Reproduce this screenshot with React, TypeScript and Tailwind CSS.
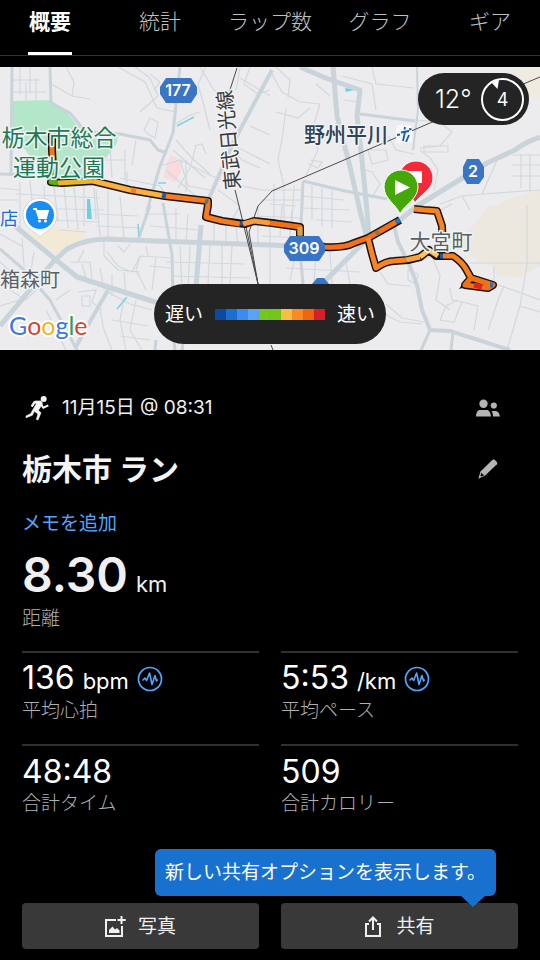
import React from 'react';

interface Road {
  d: string;
  w: number;
}

interface Segment {
  d: string;
  color: string;
}

interface Stat {
  value: string;
  unit?: string;
  label: string;
  trend?: boolean;
}

const tabs = ['概要', '統計', 'ラップ数', 'グラフ', 'ギア'];

const stats: Stat[] = [
  { value: '136', unit: 'bpm', label: '平均心拍', trend: true },
  { value: '5:53', unit: '/km', label: '平均ペース', trend: true },
  { value: '48:48', label: '合計タイム' },
  { value: '509', label: '合計カロリー' },
];

const legendColors = [
  'bg-[#0a4a9f]',
  'bg-[#1a6fd0]',
  'bg-[#3a8cf0]',
  'bg-[#5aa2f2]',
  'bg-[#72c61c]',
  'bg-[#72c61c]',
  'bg-[#f5bf45]',
  'bg-[#f98a25]',
  'bg-[#ec660c]',
  'bg-[#d61f26]',
];

const mainRoads: Road[] = [
  { d: 'M0 326 53 262 67 249Q85 239 107 239L155 241 270 245 310 247', w: 5 },
  { d: 'M10 222 77 277 155 302 185 310', w: 5 },
  { d: 'M0 249 22 268 50 300 77 350', w: 3 },
  { d: 'M75 348 108 290', w: 4 },
  { d: 'M201 225 198 262 195 300', w: 5 },
  { d: 'M163 203 172 255 173 300', w: 3 },
  { d: 'M150 205 138 240', w: 3 },
  { d: 'M272 70 233 143 207 203', w: 4 },
  { d: 'M50 67 51 103 70 113 84 130 95 132 120 134 150 140 158 150 167 153', w: 3 },
  { d: 'M180 67 173 133 160 166 147 211', w: 3 },
  { d: 'M12 67 11 176M0 174 50 176', w: 3 },
  { d: 'M333 67 337 116 350 167 360 211 367 238', w: 5 },
  { d: 'M300 67 328 79 360 90 357 116 362 160 367 211 369 236', w: 5 },
  { d: 'M360 114 415 121', w: 3 },
  { d: 'M417 67 418 110 413 150', w: 2 },
  { d: 'M540 137Q525 142 515 150L487 163 417 206 400 220 368 238 330 276 298 308', w: 5 },
  { d: 'M303 181 345 191 387 199M303 181 300 250 303 285', w: 3 },
  { d: 'M393 222 398 242 410 266 417 285 422 310 430 330 M430 330 450 331 510 350', w: 4 },
  { d: 'M430 330 421 350M453 332 451 350', w: 3 },
  { d: 'M174 340 175 350M156 340 155 350M183 342 182 350', w: 3 },
];

const streets = [
  'M20 67V95M30 67V94M12 80H40M12 92H46M26 82V100M36 78V102',
  'M51 84 72 96 90 99M66 67 74 82 72 96',
  'M135 67 150 78 158 96M158 96 140 112M150 118 158 122 155 138 148 134 144 130 150 118',
  'M118 67 145 82 157 108 176 112M150 74 160 82 154 90',
  'M176 124 188 116 200 112M200 67 214 90 232 100M206 67 198 84 204 106 210 130',
  'M240 68 236 90M240 78 270 96M250 67 244 84 258 94 270 90M250 126 270 135M233 145 270 164',
  'M176 140 192 158 210 174M160 166 180 160 196 168 212 176M180 160 188 186 210 190M196 146 190 168 178 188',
  'M212 176 232 184 262 190M233 150 242 160 260 168M218 190 240 206 232 220',
  'M173 150 205 178M166 170 200 200M186 192 186 160M194 146 202 144 206 154',
  'M125 150V182M110 146 112 178M136 140 132 165M100 160H126M120 178 160 186 170 202M127 172V186',
  'M20 182V230M30 180 34 222M44 186 46 220M54 186 58 222M64 186 68 228M74 186 78 230M84 186V226M94 188 96 220',
  'M16 194 100 198M24 208 104 210M50 220 100 222M60 230 86 232M0 188 20 190M0 200H18',
  'M96 190 100 236M108 190V238M120 196 124 238M96 214 138 216M96 226 140 228',
  'M107 252 118 266 132 272 140 256M118 246 124 252 130 244M104 240 104 256 118 270 140 272',
  'M82 264 86 278M70 262 90 262 92 278M84 250 78 262M100 268 104 290M112 274 112 296M124 272 126 296',
  'M140 256 172 258M140 256 136 270 146 290M146 246 148 256M150 266 170 268M156 258 152 290',
  'M78 292 96 290 92 302 102 310M82 296H90V306H82ZM56 300 70 290M46 310 66 350M100 310 104 330 112 350',
  'M108 292 130 304 152 310M124 298 120 320 126 350M136 300 130 330 142 350M112 320 148 326M120 336 150 340',
  'M0 262 20 280M10 290 26 300 40 286M22 238 24 266M34 252 30 276M0 306 20 300M0 234 22 246',
  'M180 246 182 290M190 246 188 290M210 246 208 284M222 246 222 286M232 246 230 284M166 262 245 264M172 276 250 278',
  'M176 208V242M188 214 186 244M214 222V244M226 224V246M236 226 238 246M150 226 200 230M144 214 180 214',
  'M258 206V245M270 226V284M282 206 280 236M292 210 290 236M262 236 298 238M258 216 300 218M270 204 296 206',
  'M274 184V222M284 186V222M294 186 292 222M262 190H302M262 200H300M312 186V220M322 188V226M332 190V228M302 196 344 200M302 208 350 210M316 220 352 222',
  'M272 74 282 92 300 102 320 104M276 67 290 80 288 98M286 108 282 140 278 160 284 186M320 104 312 130 318 150 306 176',
  'M276 112 298 118 310 108M316 84 330 96M342 76 372 84 376 110M344 100 360 102M372 67 376 84 414 88',
  'M310 160 322 162 318 168 308 164M360 168 372 172 380 184 372 198M368 150 386 150 388 160 372 164ZM388 136 396 150 414 154',
  'M414 120 440 122 452 132 440 146 420 148M436 112 440 122M420 150 430 158 438 170 434 190M424 146H448V152H424Z',
  'M440 204 462 196 482 194 540 190M482 194 498 158M462 196 470 210M521 154 521 188M530 154V192M512 155H540M512 165H540M512 176H540',
  'M296 252 290 280M316 252 314 284M330 252 332 284M345 258 350 284M286 268 360 272M300 262 304 282',
  'M380 272 388 284 410 286M408 270 418 274 416 284 408 280ZM418 262 432 256 440 276 436 300 450 310',
  'M437 212 452 204M470 263H540V266M527 205 527 265 520 306 507 350M494 266V282M504 286 498 300 488 330M458 300 446 306 440 320 454 322 462 302 478 306 474 330',
  'M450 288 452 300 462 302M490 282 540 300M520 306 540 312M386 304 402 318 424 322M382 310 388 316 400 322 422 324',
];

const route =
  'M52 131 52 150 53 168 51 182 62 183 93 181 130 190 165 196 208 201 208 205 206 217 222 221 245 224 254 221 272 223 300 227 300 244 325 247Q345 248 354 243L368 238 384 229 400 220M368 238 372 254 376 268Q386 261 394 261L408 260 420 257 429 250 436 256 453 256Q462 262 466 269L471 278 493 285 488 288 465 285 471 278M414 209 424 210 437 211 442 226 443 252';

const segments: Segment[] = [
  { d: 'M52 131 52 140', color: '#8d9085' },
  { d: 'M52 140 52 150 53 168', color: '#f0791a' },
  { d: 'M53 168 51 182 58 183', color: '#5fae1c' },
  { d: 'M58 183 93 181', color: '#e9b52c' },
  { d: 'M93 181 130 190 165 196', color: '#fbb03e' },
  { d: 'M131 190 136 191', color: '#f57d20' },
  { d: 'M165 196 208 201 208 205 206 217 222 221 240 224', color: '#f77b1c' },
  { d: 'M162 195 166 196', color: '#1e5aa8' },
  { d: 'M205 201 208 202', color: '#51748a' },
  { d: 'M240 223 243 224', color: '#1e5aa8' },
  { d: 'M243 224 254 221 270 223', color: '#fb9c35' },
  { d: 'M270 223 300 227 300 244 325 247Q345 248 354 243L368 238 384 229 396 222', color: '#f0711a' },
  { d: 'M300 227V235', color: '#d3a83a' },
  { d: 'M396 222 400 220', color: '#1e7abf' },
  { d: 'M376 234 379 232', color: '#7e7462' },
  { d: 'M368 238 372 254 376 268Q386 261 394 261L406 260', color: '#f98426' },
  { d: 'M406 260 420 257', color: '#f9a23a' },
  { d: 'M420 257 429 250 438 256', color: '#ffc64f' },
  { d: 'M440 256 443 256', color: '#1e5aa8' },
  { d: 'M443 256 453 256Q462 262 466 269L471 278', color: '#f58020' },
  { d: 'M471 278 493 285 488 288 465 285 471 278', color: '#ee7218' },
  { d: 'M474 285 482 287', color: '#dc2618' },
  { d: 'M490 285 493 285', color: '#2f6fae' },
  { d: 'M414 209 424 210 437 211 442 226 443 252', color: '#f58425' },
];

const RunIcon = () => (
  <svg viewBox="75 45 75 78" className="w-[25px] h-[26px]" fill="none" stroke="#f4f4f4" aria-hidden="true">
    <circle cx="131" cy="57" r="9" fill="#f4f4f4" stroke="none" />
    <path d="M95 80 103 67 120 67" strokeWidth="7" />
    <path d="M104 63 122 63Q129 67 127 73L115 91 123 98 114 120 109 118 114 102 103 94 97 106 78 113 78 108 92 101 109 71Z" fill="#f4f4f4" strokeWidth="2" />
    <path d="M121 71 130 83 145 76" strokeWidth="6" />
  </svg>
);

const PeopleIcon = () => (
  <svg viewBox="0 0 24 18" className="w-6 h-[18px]" fill="#b4b4b4" aria-hidden="true">
    <circle cx="7.5" cy="4.7" r="4.2" />
    <circle cx="17.8" cy="6.5" r="3.1" />
    <path d="M0 17.5C.2 13.500 1.500 11 4.200 11H10.500C13.200 11 14.500 13.500 15 17.500ZM15.500 12H20C22.300 12.500 23.500 14.500 23.900 17.500H17C16.900 15 16.500 13.300 15.500 12Z" />
  </svg>
);

const PencilIcon = () => (
  <svg viewBox="0 0 20 20" className="w-5 h-5" aria-hidden="true">
    <path d="M14.500.800Q15.800 0 16.700.800L18.900 3Q19.800 4 18.900 5.300L7.200 16.500.300 19.700 2.500 12.500Z" fill="#b4b4b4" />
    <path d="M3.700 13.500 4.600 15.300 6.400 16 3.200 17.600 2.400 16.800Z" fill="#000" />
  </svg>
);

const TrendIcon = () => (
  <svg viewBox="0 0 26 26" className="w-[26px] h-[26px]" fill="none" stroke="#4fa6ff" aria-hidden="true">
    <circle cx="13" cy="13" r="11.500" strokeWidth="1.700" />
    <path d="M5.500 14.500 8 12 9.600 14.500 12.600 7 15 18.500 18 9.500 19.500 15 20.700 13.500" strokeWidth="1.600" strokeLinejoin="round" />
  </svg>
);

const PhotoIcon = () => (
  <svg viewBox="0 0 21 21" className="w-[21px] h-[21px]" fill="none" stroke="#f0f0f0" strokeWidth="2" aria-hidden="true">
    <path d="M11 4H1V20H17V10M16.500 0V8M12.500 4H20.700" />
    <path d="M4 17V14L7.500 10.500 10 13.500 12 12 14.500 14.500V17Z" fill="#f0f0f0" stroke="none" />
  </svg>
);

const ShareIcon = () => (
  <svg viewBox="0 0 18 21" className="w-[18px] h-[21px]" fill="none" stroke="#f0f0f0" strokeWidth="2" aria-hidden="true">
    <path d="M5 8H2V20H16V8H13M9 14V2M5 5.500 9 1.500 13 5.500" />
  </svg>
);

const RouteMap = () => (
  <svg
    viewBox="0 67 540 283"
    preserveAspectRatio="xMidYMid slice"
    className="block w-full h-[283px] bg-[#ecebed] font-['Inter','Noto_Sans_CJK_JP',sans-serif]"
    role="img"
    aria-label="ランのルート"
  >
    {/* land use */}
    <path d="M13 101 50 100 65 110 77 125 93 137 118 133 117 143 100 166 103 180 48 181 13 133Z" fill="#b4e6c9" />
    <path d="M490 205H540V265H484L457 245Z" fill="#ece7df" />
    <path d="M494 265H540L520 277 497 276Z" fill="#ece7df" />
    <path d="M512 67H540V100L520 92Z" fill="#f0ebe0" />
    <path d="M505 200 540 190V210H488Z" fill="#ece7df" />
    <path d="M50 229 80 228 85 236 60 256 28 234Z" fill="#f3ead6" />
    <path d="M170 155 180 160 181 172 175 182 163 177Z" fill="#f9dadd" />

    <g fill="none" stroke="#d0dade" strokeWidth="1.200">
      {streets.map((d) => (
        <path key={d} d={d} />
      ))}
    </g>
    <g fill="none" stroke="#c8d4da" strokeLinejoin="round">
      {mainRoads.map((road) => (
        <path key={road.d} d={road.d} strokeWidth={road.w} />
      ))}
    </g>

    {/* water */}
    <path d="M177 126 194 117M117 309 127 297M138 224 139 236M158 183H166" fill="none" stroke="#7fd3e2" strokeWidth="1.500" />
    <path d="M87 199H90L92 219H87ZM345 88 354 90 346 92Z" fill="#6fd0e2" />

    {/* railways */}
    <g fill="none" stroke="#4a4a4c" strokeWidth="1">
      <path d="M237 68 228 96M235 190 240 210 258 284M245 222 258 284" />
      <path d="M540 77 430 123 272 191 258 206 249 232 258 284" />
      <path d="M271 345 273 350" />
    </g>

    {/* activity track */}
    <g fill="none" strokeLinejoin="round">
      <path d={route} stroke="#1c1410" strokeWidth="8" />
      <path d="M459 289 466 279V287Z" fill="#1c1410" />
      {segments.map((s) => (
        <path key={s.d} d={s.d} stroke={s.color} strokeWidth="5" />
      ))}
    </g>

    {/* road numbers */}
    <g fill="#3a74c4">
      <path d="M166 78H191L197 87V94L191 103H166L160 94V87Z" />
      <path d="M467 159H479L484 167V177L479 184H467L463 177V167Z" />
      <path d="M290 236H319L325 245V252L319 261H290L284 252V245Z" />
      <path d="M317 278H324L329 284V300H312V284Z" />
    </g>
    <g fill="#fff" fontSize="16" fontWeight="600" textAnchor="middle">
      <text x="178" y="96">177</text>
      <text x="473" y="177">2</text>
      <text x="304" y="254">309</text>
    </g>

    {/* place names */}
    <g stroke="#f1f3f3" strokeWidth="3" strokeLinejoin="round" style={{ paintOrder: 'stroke' }} textAnchor="middle">
      <text x="59" y="146" fontSize="23" fill="#1d7a56">栃木市総合</text>
      <text x="59" y="176" fontSize="23" fill="#1d7a56">運動公園</text>
      <text x="346" y="142" fontSize="21" fontWeight="500" fill="#2f4358">野州平川</text>
      <text x="441" y="249" fontSize="21" fill="#5b5f66">大宮町</text>
      <text x="30" y="287" fontSize="20" fill="#5b5f66">箱森町</text>
      <text x="9" y="225" fontSize="18" fill="#1f68d8">店</text>
      <text x="231" y="149" fontSize="20" fill="#3a3a3c" transform="rotate(-95 229 142)">東武日光線</text>
    </g>

    {/* station mark */}
    <rect x="396" y="125" width="16" height="18" rx="3" fill="#f6f7f8" />
    <path d="M397 135 400 134.500M401 132.500 409 131M405 132 403 141M409 135 406 142M405 127 404.500 129.500M409 129.500 411.500 129" stroke="#1a5bb0" strokeWidth="1.800" fill="none" />

    {/* shop pin */}
    <path d="M40 237C36 232 23 228 23 215A17 17 0 0 1 57 215C57 228 44 232 40 237Z" fill="#fff" stroke="#c9ccd0" strokeWidth=".800" />
    <circle cx="40" cy="215" r="14" fill="#1a8df4" />
    <path d="M33 209H36L39 218H46L48 211H37" fill="none" stroke="#fff" strokeWidth="1.800" />
    <path d="M37 211H48L46 217H39Z" fill="#fff" />
    <circle cx="39.500" cy="221" r="1.500" fill="#fff" />
    <circle cx="45.500" cy="221" r="1.500" fill="#fff" />

    {/* finish and start pins */}
    <path d="M415 203C412 195 399 190 399 178A17 17 0 0 1 433 178C433 190 419 195 415 203Z" fill="#f52a38" stroke="#fff" strokeWidth="1" />
    <rect x="408" y="171" width="14" height="12" fill="#fff" />
    <path d="M400 214C396 204 384 199 384 187A17 17 0 0 1 418 187C418 199 405 204 400 214Z" fill="#43a808" stroke="#fff" strokeWidth="1" />
    <path d="M395 180V195L410 187.500Z" fill="#fff" />

    <g className="font-['Lato',sans-serif]" strokeWidth="4" stroke="#fff" strokeLinejoin="round" style={{ paintOrder: 'stroke' }}>
      <text x="9" y="335" fontSize="25">
        <tspan fill="#3b78e7">G</tspan>
        <tspan fill="#e0402f">o</tspan>
        <tspan fill="#f2b512">o</tspan>
        <tspan fill="#3b78e7">g</tspan>
        <tspan fill="#2f9e4f">l</tspan>
        <tspan fill="#e0402f">e</tspan>
      </text>
    </g>
  </svg>
);

const WeatherBadge = () => (
  <div className="absolute top-[6px] right-[11px] flex items-center justify-between w-[111px] h-[52px] pl-[17px] pr-[5px] rounded-full bg-[#242424] text-white">
    <span className="pt-0.5 text-[25px] font-light">12°</span>
    <span className="relative flex items-center justify-center w-[43px] h-[43px] rounded-full border-2 border-white text-[18px]">
      4
      <svg viewBox="0 0 10 10" className="absolute top-0 left-[7px] w-[10px] h-[10px]" aria-hidden="true">
        <path d="M.500 1.500 9 0 7.500 9Z" fill="#fff" />
      </svg>
    </span>
  </div>
);

const PaceLegend = () => (
  <div className="absolute bottom-[6px] left-1/2 -translate-x-1/2 flex items-center gap-3 h-[60px] px-[11px] rounded-full bg-[#242424] text-white text-[19px] whitespace-nowrap">
    <span className="pt-0.5">遅い</span>
    <span className="flex">
      {legendColors.map((color, i) => (
        <span key={i} className={`w-[11px] h-[11px] ${color}`} />
      ))}
    </span>
    <span className="pt-0.5">速い</span>
  </div>
);

const StatCell = ({ stat }: { stat: Stat }) => (
  <div className="border-t-2 border-[#303030] pt-[10px] pb-[19px]">
    <div className="flex items-center h-8 text-white">
      <div className="flex items-baseline gap-2 leading-8">
        <span className="text-[32px]">{stat.value}</span>
        {stat.unit && <span className="text-[22px]">{stat.unit}</span>}
      </div>
      {stat.trend && (
        <button className="ml-2" aria-label={`${stat.label}の推移`}>
          <TrendIcon />
        </button>
      )}
    </div>
    <div className="h-7 mt-0.5 leading-7 text-[19px] font-light text-[#b0b0b0]">{stat.label}</div>
  </div>
);

const App = () => {
  return (
    <div className="min-h-screen bg-black text-white overflow-x-hidden font-['Inter','Noto_Sans_CJK_JP',sans-serif]">
      <nav className="h-14 border-b border-[#333333]">
        <div className="grid grid-cols-5 -mx-[5px] h-full">
          {tabs.map((tab, i) => (
            <button
              key={tab}
              className={`flex flex-col items-center justify-between h-full text-[21px] leading-[44px] whitespace-nowrap ${
                i === 0 ? 'font-bold text-white' : 'font-light text-[#c0c0c0]'
              }`}
            >
              {tab}
              <span className={`w-11 h-[3px] ${i === 0 ? 'bg-white' : 'bg-transparent'}`} />
            </button>
          ))}
        </div>
      </nav>

      <div className="relative mt-[11px]">
        <RouteMap />
        <WeatherBadge />
        <PaceLegend />
      </div>

      <main className="px-[22px] pt-11 pb-[11px]">
        <div className="flex items-center justify-between h-7">
          <div className="flex items-center gap-3 pl-[3px]">
            <RunIcon />
            <span className="text-[19px] text-[#f0f0f0]">11月15日 @ 08:31</span>
          </div>
          <button className="mr-[18px]" aria-label="プライバシー">
            <PeopleIcon />
          </button>
        </div>

        <div className="flex items-center justify-between h-10 mt-[27px]">
          <h1 className="text-[30px] leading-10 font-bold text-[#f4f4f4]">栃木市 ラン</h1>
          <button className="mr-5" aria-label="名前を編集">
            <PencilIcon />
          </button>
        </div>

        <a href="#memo" className="block w-fit mt-[21px] leading-7 text-[19px] text-[#4fa6ff]">
          メモを追加
        </a>

        <div className="flex items-baseline gap-2 h-12 mt-[13px] leading-[48px] text-[#f0f0f0]">
          <span className="text-[48px] font-semibold">8.30</span>
          <span className="text-[22px]">km</span>
        </div>
        <div className="h-7 mt-[6px] mb-[18px] leading-7 text-[19px] font-light text-[#b0b0b0]">距離</div>

        <div className="grid grid-cols-2 gap-x-[22px]">
          {stats.map((stat) => (
            <StatCell key={stat.label} stat={stat} />
          ))}
        </div>

        <div className="relative grid grid-cols-2 gap-x-[22px] mt-[66px]">
          <button className="flex items-center justify-center gap-3 h-[46px] rounded-[4px] bg-[#393939] text-[19px] text-[#f0f0f0]">
            <PhotoIcon />
            <span className="pt-0.5">写真</span>
          </button>
          <button className="flex items-center justify-center gap-[14px] h-[46px] rounded-[4px] bg-[#393939] text-[19px] text-[#f0f0f0]">
            <ShareIcon />
            <span className="pt-0.5">共有</span>
          </button>
          <div
            role="tooltip"
            className="absolute right-[22px] bottom-[53px] h-[47px] px-[10px] rounded-[6px] bg-[#1971cf] text-[19px] leading-[48px] whitespace-nowrap"
          >
            新しい共有オプションを表示します。
            <svg viewBox="0 0 24 11" className="absolute top-full right-[11px] w-6 h-[11px]" aria-hidden="true">
              <path d="M0 0H24L12 11Z" fill="#1971cf" />
            </svg>
          </div>
        </div>
      </main>
    </div>
  );
};

export default App;
